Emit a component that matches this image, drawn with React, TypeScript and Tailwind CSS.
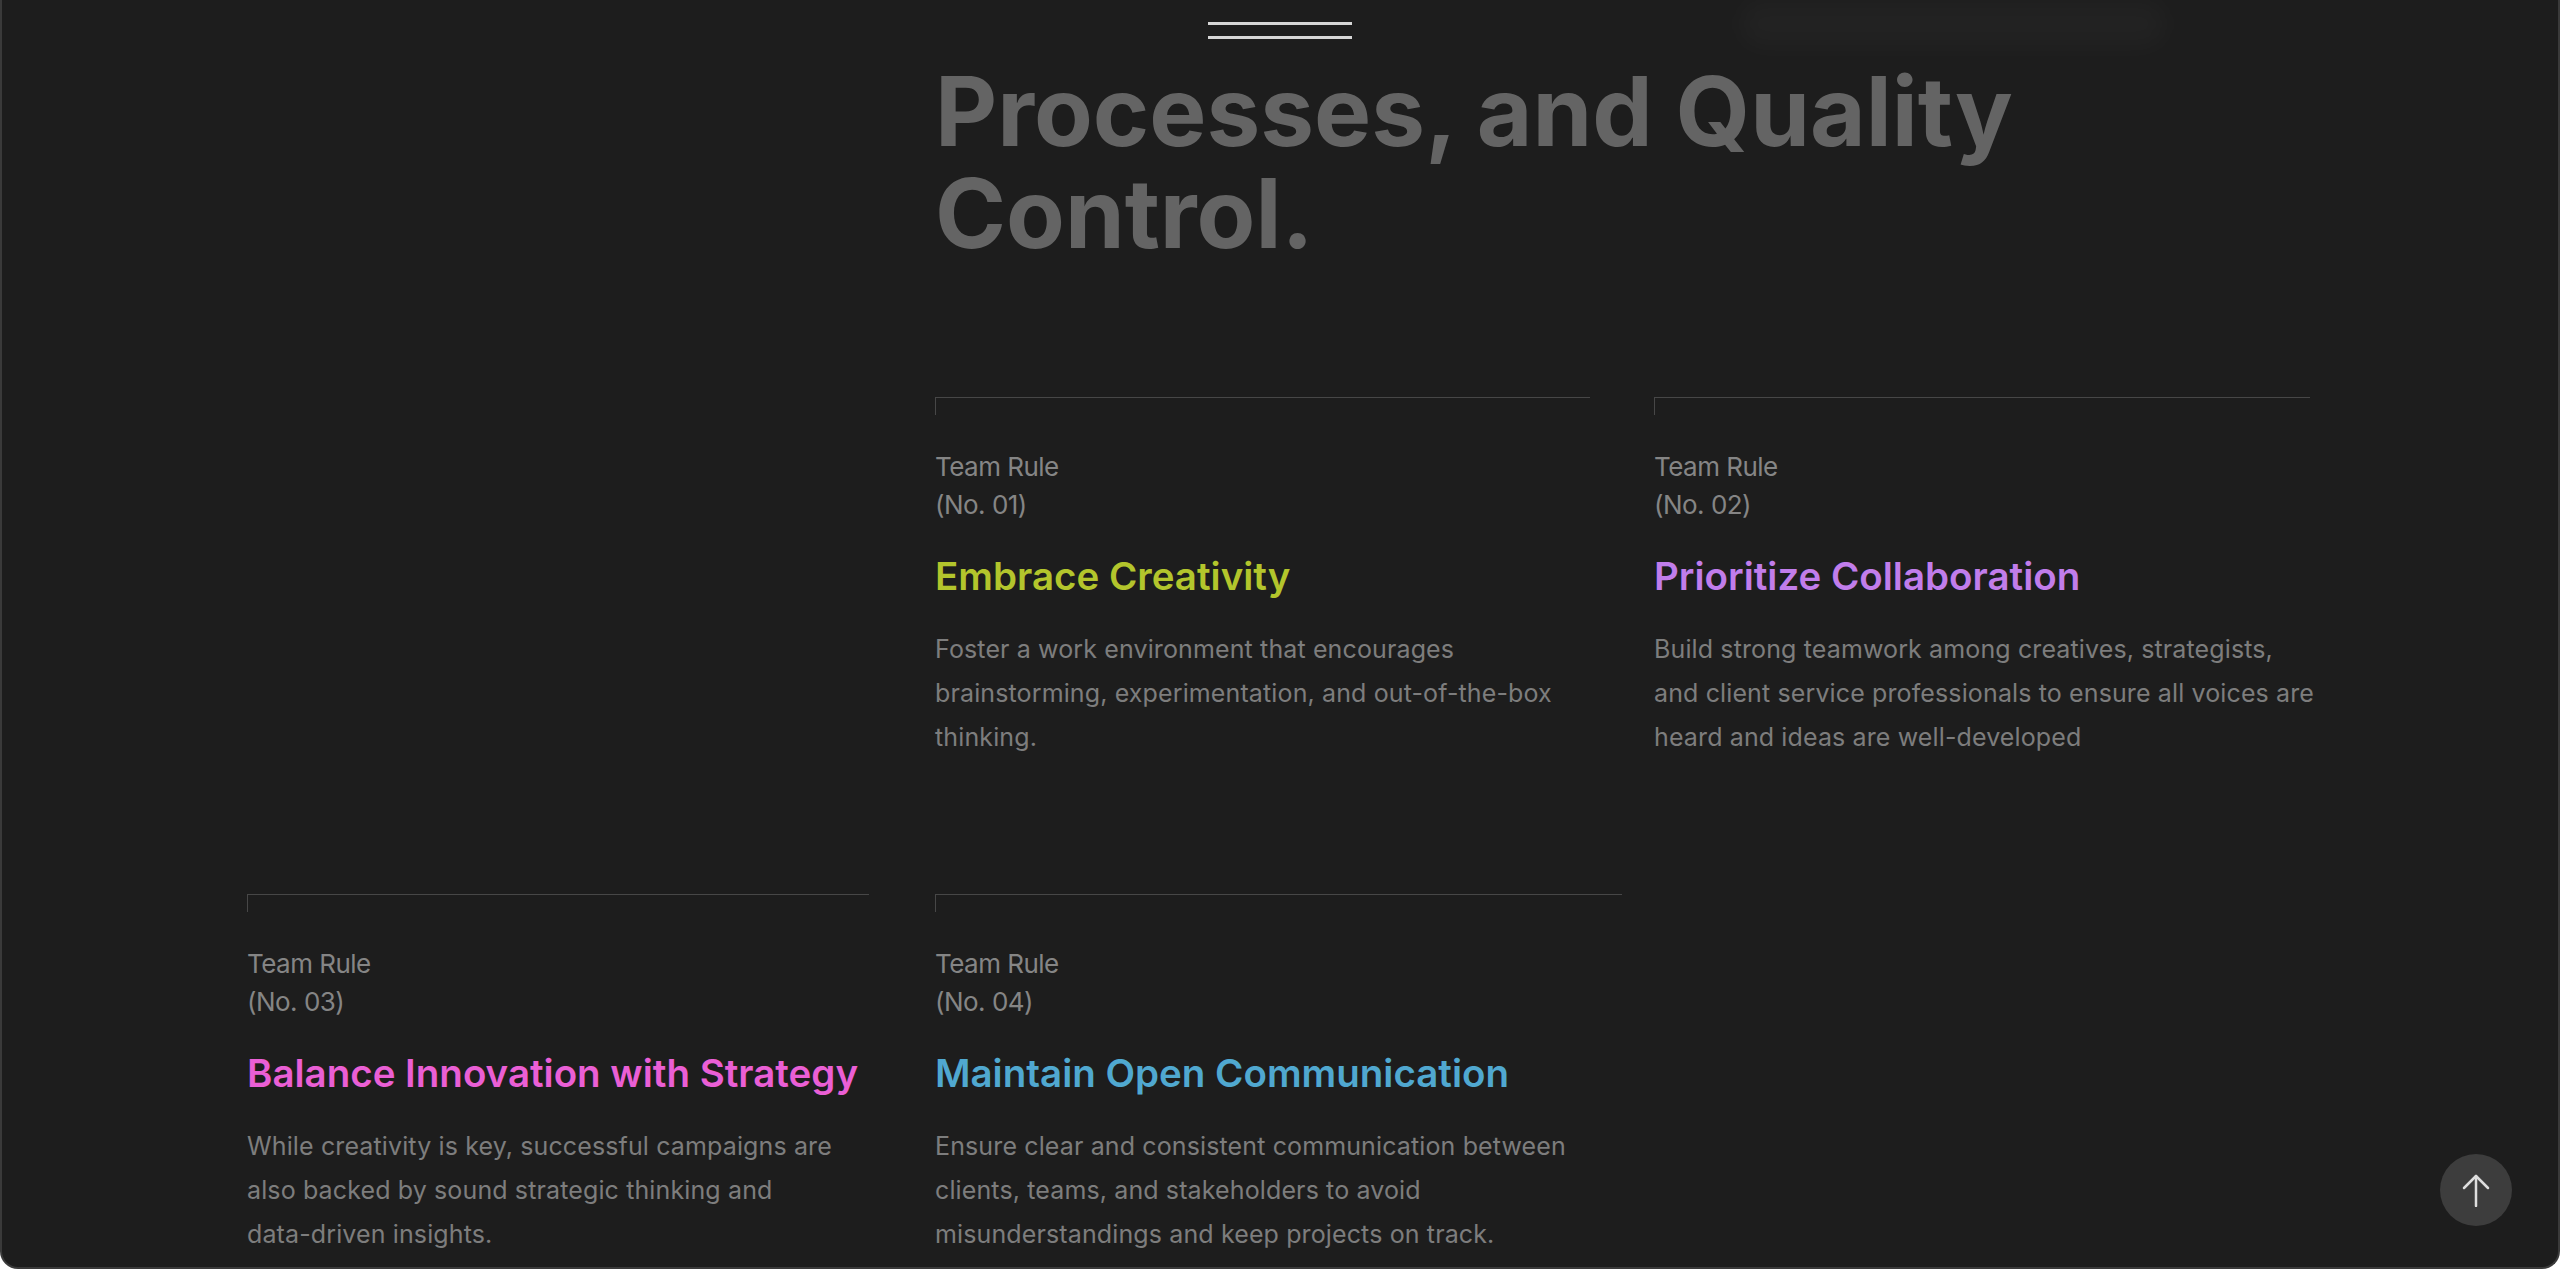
import React from 'react';

type Rule = {
  no: string;
  title: string;
  color: string;
  lines: string[];
  width: string;
};

const rowOne: Rule[] = [
  {
    no: '01',
    title: 'Embrace Creativity',
    color: 'text-[#b3c52c]',
    width: 'w-[656px]',
    lines: [
      'Foster a work environment that encourages',
      'brainstorming, experimentation, and out-of-the-box',
      'thinking.',
    ],
  },
  {
    no: '02',
    title: 'Prioritize Collaboration',
    color: 'text-[#c17deb]',
    width: 'w-[656px]',
    lines: [
      'Build strong teamwork among creatives, strategists,',
      'and client service professionals to ensure all voices are',
      'heard and ideas are well-developed',
    ],
  },
];

const rowTwo: Rule[] = [
  {
    no: '03',
    title: 'Balance Innovation with Strategy',
    color: 'text-[#ea5fd5]',
    width: 'w-[622px]',
    lines: [
      'While creativity is key, successful campaigns are',
      'also backed by sound strategic thinking and',
      'data-driven insights.',
    ],
  },
  {
    no: '04',
    title: 'Maintain Open Communication',
    color: 'text-[#50a8d0]',
    width: 'w-[687px]',
    lines: [
      'Ensure clear and consistent communication between',
      'clients, teams, and stakeholders to avoid',
      'misunderstandings and keep projects on track.',
    ],
  },
];

const RuleCard = ({ rule }: { rule: Rule }) => (
  <div className={`relative ${rule.width} border-t border-[#474747] pt-[50px]`}>
    {/* small tick under the start of the rule line */}
    <div className="absolute left-0 top-0 w-px h-[17px] bg-[#474747]"></div>
    <div className="text-[26px] leading-[38px] text-[#858585] tracking-[-0.02em]">
      <p>Team Rule</p>
      <p>(No. {rule.no})</p>
    </div>
    <h3 className={`mt-[27px] whitespace-nowrap text-[38.5px] leading-[50px] font-semibold ${rule.color}`}>
      {rule.title}
    </h3>
    <div className="mt-[26px] text-[25px] leading-[44px] text-[#7d7d7d] tracking-[0.005em]">
      {rule.lines.map((line) => (
        <p key={line} className="whitespace-nowrap">{line}</p>
      ))}
    </div>
  </div>
);

export default function App() {
  return (
    <div className="relative h-[1269px] w-full overflow-hidden bg-[#1d1d1d] border-x-2 border-b-2 border-[#3a3a3a] rounded-b-[18px] font-['Inter',sans-serif]">
      <div className="absolute inset-x-0 top-0 z-20 h-[62px] bg-[#1d1d1d]/85 backdrop-blur-md">
        <div className="absolute right-[390px] top-0 h-[48px] w-[430px] rounded-[24px] bg-white/[0.025] blur-md"></div>
        <button className="absolute left-1/2 top-[22px] -translate-x-1/2 flex flex-col gap-[11px]" aria-label="Menu">
          <span className="block h-[3px] w-[144px] bg-[#d6d6d6]"></span>
          <span className="block h-[3px] w-[144px] bg-[#d6d6d6]"></span>
        </button>
      </div>

      <main className="pl-[245px] pr-[248px] pt-[60px]">
        <h2 className="ml-[688px] text-[96px] leading-[102px] font-bold text-[#646464]">
          Processes, and Quality
          <br />
          Control.
        </h2>

        <div className="mt-[133px] ml-[688px] flex gap-[64px]">
          {rowOne.map((r) => (
            <RuleCard key={r.no} rule={r} />
          ))}
        </div>

        <div className="mt-[135px] flex gap-[66px]">
          {rowTwo.map((r) => (
            <RuleCard key={r.no} rule={r} />
          ))}
        </div>
      </main>

      <button
        aria-label="Back to top"
        className="absolute bottom-[41px] right-[46px] z-30 flex h-[72px] w-[72px] items-center justify-center rounded-full bg-[#3d3d3d]"
      >
        <svg width="28" height="34" viewBox="0 0 28 34" fill="none" stroke="#dedede" strokeWidth="2.5" strokeLinecap="round" strokeLinejoin="round">
          <path d="M14 3V33" />
          <path d="M2 15L14 3L26 15" />
        </svg>
      </button>
    </div>
  );
}
